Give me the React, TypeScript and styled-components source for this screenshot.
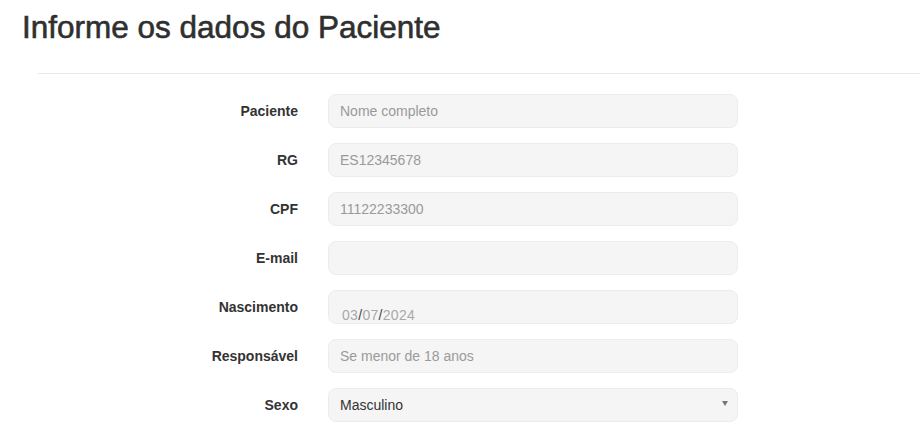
import React from "react";
import styled, { createGlobalStyle } from "styled-components";

const Global = createGlobalStyle`
  body {
    margin: 0;
    background: #ffffff;
    font-family: "Liberation Sans", Arial, Helvetica, sans-serif;
    color: #333333;
  }
`;

const Page = styled.div`
  width: 920px;
`;

const Title = styled.h1`
  margin: 0;
  padding: 10px 0 0 22px;
  font-size: 31.5px;
  line-height: 34px;
  font-weight: normal;
  color: #2f2f2f;
  -webkit-text-stroke: 0.6px #2f2f2f;
  height: 63px;
  box-sizing: border-box;
  white-space: nowrap;
`;

const Divider = styled.hr`
  margin: 10px 0 0 38px;
  border: 0;
  border-top: 1px solid #e8e8e8;
  height: 0;
`;

const Form = styled.div`
  display: grid;
  grid-template-columns: 260px 410px;
  column-gap: 30px;
  row-gap: 15px;
  margin-left: 38px;
  padding-top: 20px;
`;

const Label = styled.label`
  display: flex;
  align-items: center;
  justify-content: flex-end;
  font-size: 14px;
  font-weight: bold;
  color: #333333;
  height: 34px;
`;

const fieldBase = `
  box-sizing: border-box;
  width: 410px;
  height: 34px;
  border: 1px solid #ececec;
  border-radius: 8px;
  background: #f5f5f5;
  padding: 0 11px;
  font-family: "Liberation Sans", Arial, Helvetica, sans-serif;
  font-size: 14px;
  color: #333333;
  outline: none;
`;

const Input = styled.input`
  ${fieldBase}
  &::placeholder {
    color: #9a9a9a;
  }
`;

const DateField = styled.div`
  ${fieldBase}
  display: flex;
  align-items: flex-start;
  padding-top: 16px;
  padding-left: 13px;
  line-height: 16px;
  letter-spacing: 0.3px;
`;

const DatePart = styled.span<{ $dim?: boolean }>`
  color: ${(p) => (p.$dim ? "#a8a8a8" : "#444444")};
`;

const Select = styled.div`
  ${fieldBase}
  display: flex;
  align-items: center;
  justify-content: space-between;
  padding-right: 9px;
`;

const Caret = styled.span`
  width: 0;
  height: 0;
  border-left: 3.5px solid transparent;
  border-right: 3.5px solid transparent;
  border-top: 5px solid #777777;
  margin-top: -4px;
`;

export default function App() {
  return (
    <Page>
      <Global />
      <Title>Informe os dados do Paciente</Title>
      <Divider />
      <Form>
        <Label>Paciente</Label>
        <Input placeholder="Nome completo" />
        <Label>RG</Label>
        <Input placeholder="ES12345678" />
        <Label>CPF</Label>
        <Input placeholder="11122233300" />
        <Label>E-mail</Label>
        <Input />
        <Label>Nascimento</Label>
        <DateField>
          <DatePart $dim>03</DatePart>
          <DatePart>/</DatePart>
          <DatePart $dim>07</DatePart>
          <DatePart>/</DatePart>
          <DatePart $dim>2024</DatePart>
        </DateField>
        <Label>Responsável</Label>
        <Input placeholder="Se menor de 18 anos" />
        <Label>Sexo</Label>
        <Select>
          <span>Masculino</span>
          <Caret />
        </Select>
      </Form>
    </Page>
  );
}
